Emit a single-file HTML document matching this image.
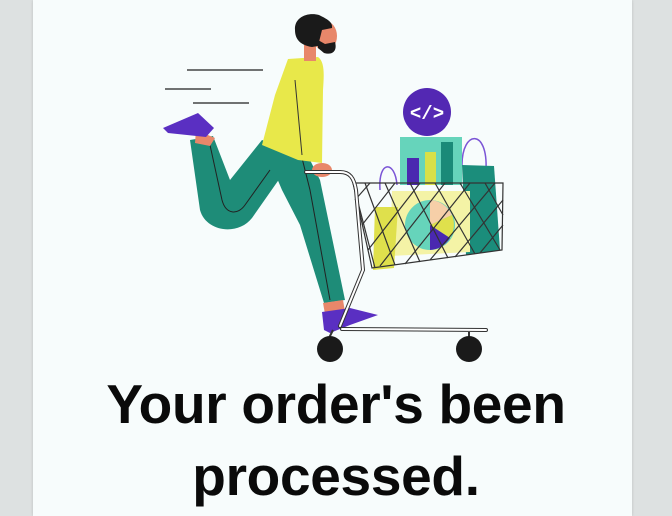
<!DOCTYPE html>
<html><head><style>
html,body{margin:0;padding:0;width:672px;height:516px;overflow:hidden;background:#dde1e1;}
.card{position:absolute;left:33px;top:0;width:599px;height:516px;background:#f7fcfc;box-shadow:0 0 3px rgba(0,0,0,.15);}
svg{position:absolute;left:0;top:0;}
.t{position:absolute;left:0;width:672px;text-align:center;font-family:"Liberation Sans",sans-serif;font-weight:bold;font-size:55px;color:#0a0a0a;line-height:72px;top:368px;letter-spacing:-0.3px;}
</style></head><body>
<div class="card"></div>
<svg width="672" height="516" viewBox="0 0 672 516">
 <g stroke="#444" stroke-width="1.5">
  <line x1="187" y1="70" x2="263" y2="70"/>
  <line x1="165" y1="89" x2="211" y2="89"/>
  <line x1="193" y1="103" x2="249" y2="103"/>
 </g>
 <path d="M380 190 C378 160 395 160 397 185" fill="none" stroke="#7b55d6" stroke-width="1.5"/>
 <path d="M462 165 C462 130 488 128 486 170" fill="none" stroke="#7b55d6" stroke-width="1.5"/>
 <rect x="400" y="137" width="62" height="48" fill="#66d4bb"/>
 <rect x="407" y="158" width="12" height="27" fill="#4a28b0"/>
 <rect x="425" y="152" width="11" height="33" fill="#d8e048"/>
 <rect x="441" y="142" width="12" height="43" fill="#1a8a78"/>
 <polygon points="462,165 494,166 500,250 466,255" fill="#1b8d7b"/>
 <polygon points="392,191 470,191 470,252 390,256" fill="#f4f3a6"/>
 <polygon points="375,207 398,207 394,268 373,270" fill="#dfe04c"/>
 <circle cx="430" cy="225" r="25" fill="#66d4bb"/>
 <path d="M430 200 A25 25 0 0 1 452 215 L430 225Z" fill="#f6cfa8"/>
 <path d="M452 215 A25 25 0 0 1 450 238 L430 225Z" fill="#dfe04c"/>
 <path d="M450 238 A25 25 0 0 1 430 250 L430 225Z" fill="#4a28b0"/>
 <circle cx="427" cy="112" r="24" fill="#5328b3"/>
 <text x="427" y="119" font-family="Liberation Mono,monospace" font-weight="bold" font-size="19" fill="#fff" text-anchor="middle">&lt;/&gt;</text>
 <g stroke="#333" stroke-width="1.2" fill="none">
  <polygon points="353,183 503,183 502,250 372,268"/>
  <path d="M353 183 L375 268 M365 183 L395 265 M385 183 L420 262 M410 183 L448 258 M435 183 L475 254 M460 183 L500 250 M485 183 L503 215"/>
  <path d="M370 183 L355 200 M395 183 L362 225 M420 183 L368 250 M445 183 L380 266 M470 183 L405 264 M495 183 L430 260 M503 200 L455 257 M503 225 L480 253"/>
 </g>
 <!-- back leg -->
 <path d="M290 150 L262 140 L230 180 L213 136 L190 140 L200 210 C206 232 238 236 252 218 L280 178 Z" fill="#1e8c78"/>
 <path d="M210 145 L222 200 C226 215 238 215 245 205 L270 170" fill="none" stroke="#222" stroke-width="1"/>
 <path d="M196 130 L215 138 L210 146 L195 143Z" fill="#e8876a"/>
 <path d="M163 128 L198 113 L214 128 L206 137 L168 133Z" fill="#5a2fc2"/>
 <!-- front leg -->
 <path d="M265 150 L300 140 L320 180 L345 300 L324 303 L300 225 L282 190Z" fill="#1e8c78"/>
 <path d="M300 150 L310 190 L330 300" fill="none" stroke="#222" stroke-width="1"/>
 <path d="M323 303 L343 300 L345 312 L325 314Z" fill="#e8876a"/>
 <path d="M322 312 L350 308 L378 315 L350 325 L330 333 L324 330Z" fill="#5a2fc2"/>
 <!-- torso -->
 <path d="M288 59 L318 57 C325 62 324 75 323 90 L322 163 L298 160 L262 145 L275 95 Z" fill="#e8e84a"/>
 <line x1="295" y1="80" x2="302" y2="155" stroke="#333" stroke-width="1"/>
 <rect x="304" y="45" width="12" height="16" fill="#e8876a"/>
 <ellipse cx="325" cy="36" rx="12" ry="15" fill="#e8876a"/>
 <path d="M295 30 C294 17 308 12 319 15 C327 19 333 22 332 28 L322 30 L318 46 L312 47 C299 45 295 38 295 30Z" fill="#1a1a1a"/>
 <path d="M318 40 L325 44 L335 42 C338 53 330 55 324 53 L318 48Z" fill="#1a1a1a"/>
 <ellipse cx="322" cy="170" rx="10" ry="7" fill="#e8876a"/>
 <g fill="none" stroke="#333" stroke-width="4" stroke-linecap="round">
  <path d="M306 172 L340 172 C350 172 354 178 356 190 L363 270 L340 326"/>
  <path d="M342 329 L486 330"/>
 </g>
 <g fill="none" stroke="#fff" stroke-width="2" stroke-linecap="round">
  <path d="M306 172 L340 172 C350 172 354 178 356 190 L363 270 L340 326"/>
  <path d="M342 329 L486 330"/>
 </g>
 <line x1="469" y1="332" x2="469" y2="340" stroke="#333" stroke-width="2"/>
 <line x1="333" y1="330" x2="328" y2="340" stroke="#333" stroke-width="2"/>
 <circle cx="330" cy="349" r="13" fill="#1a1a1a"/>
 <circle cx="469" cy="349" r="13" fill="#1a1a1a"/>
</svg>
<div class="t">Your order's been<br>processed.</div>
</body></html>
